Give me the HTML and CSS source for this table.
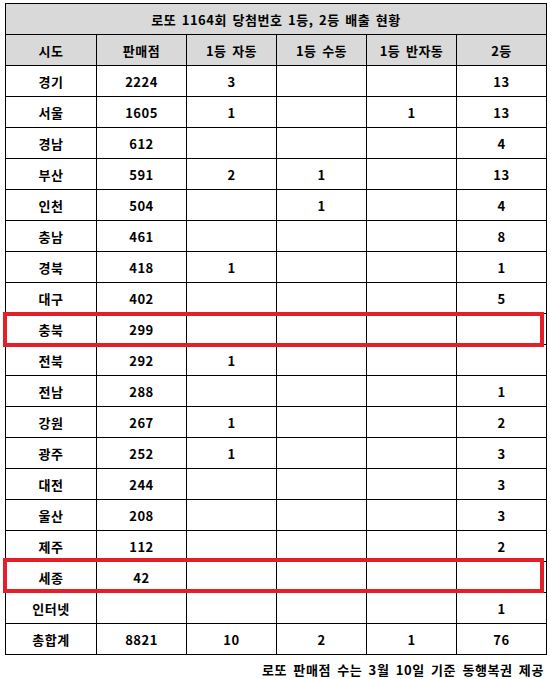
FILE: index.html
```html
<!DOCTYPE html>
<html lang="ko">
<head>
<meta charset="utf-8">
<link rel="stylesheet" href="styles.css">
</head>
<body>
<div class="wrap">
  <table class="lotto">
    <colgroup>
      <col class="c1"><col class="c"><col class="c"><col class="c"><col class="c"><col class="c">
    </colgroup>
    <tr class="title"><td colspan="6">로또 1164회 당첨번호 1등, 2등 배출 현황</td></tr>
    <tr class="head"><td>시도</td><td>판매점</td><td>1등 자동</td><td>1등 수동</td><td>1등 반자동</td><td>2등</td></tr>
    <tr><td>경기</td><td>2224</td><td>3</td><td></td><td></td><td>13</td></tr>
    <tr><td>서울</td><td>1605</td><td>1</td><td></td><td>1</td><td>13</td></tr>
    <tr><td>경남</td><td>612</td><td></td><td></td><td></td><td>4</td></tr>
    <tr><td>부산</td><td>591</td><td>2</td><td>1</td><td></td><td>13</td></tr>
    <tr><td>인천</td><td>504</td><td></td><td>1</td><td></td><td>4</td></tr>
    <tr><td>충남</td><td>461</td><td></td><td></td><td></td><td>8</td></tr>
    <tr><td>경북</td><td>418</td><td>1</td><td></td><td></td><td>1</td></tr>
    <tr><td>대구</td><td>402</td><td></td><td></td><td></td><td>5</td></tr>
    <tr><td>충북</td><td>299</td><td></td><td></td><td></td><td></td></tr>
    <tr><td>전북</td><td>292</td><td>1</td><td></td><td></td><td></td></tr>
    <tr><td>전남</td><td>288</td><td></td><td></td><td></td><td>1</td></tr>
    <tr><td>강원</td><td>267</td><td>1</td><td></td><td></td><td>2</td></tr>
    <tr><td>광주</td><td>252</td><td>1</td><td></td><td></td><td>3</td></tr>
    <tr><td>대전</td><td>244</td><td></td><td></td><td></td><td>3</td></tr>
    <tr><td>울산</td><td>208</td><td></td><td></td><td></td><td>3</td></tr>
    <tr><td>제주</td><td>112</td><td></td><td></td><td></td><td>2</td></tr>
    <tr><td>세종</td><td>42</td><td></td><td></td><td></td><td></td></tr>
    <tr><td>인터넷</td><td></td><td></td><td></td><td></td><td>1</td></tr>
    <tr><td>총합계</td><td>8821</td><td>10</td><td>2</td><td>1</td><td>76</td></tr>
  </table>
  <div class="mark mark-a"></div>
  <div class="mark mark-b"></div>
</div>
<p class="note">로또 판매점 수는 3월 10일 기준 동행복권 제공</p>
</body>
</html>
```

FILE: styles.css
```css
html, body {
  margin: 0;
  background: #fff;
}
body {
  padding: 3px 0 0 5px;
  font-family: "Noto Sans CJK KR", "Noto Sans", sans-serif;
  font-weight: 700;
  font-size: 13px;
  color: #000;
}
.wrap {
  position: relative;
  width: 541px;
}
.lotto {
  border-collapse: collapse;
  table-layout: fixed;
  width: 541px;
  letter-spacing: 0.5px;
  word-spacing: 1.5px;
}
.c1 { width: 91px; }
.c { width: 90px; }
.lotto td {
  border: 1px solid #000;
  height: 30px;
  padding: 0;
  text-align: center;
  vertical-align: middle;
  line-height: 1;
}
.title td, .head td {
  background: #d9d9d9;
}
.mark {
  position: absolute;
  left: -2px;
  width: 533px;
  height: 27px;
  border: 4px solid #e3202a;
}
.mark-a { top: 309px; }
.mark-b { top: 555px; }
.note {
  margin: 7px 0 0;
  width: 539px;
  text-align: right;
  font-size: 13px;
  line-height: 16px;
  letter-spacing: 0.6px;
  word-spacing: 2px;
}
```
